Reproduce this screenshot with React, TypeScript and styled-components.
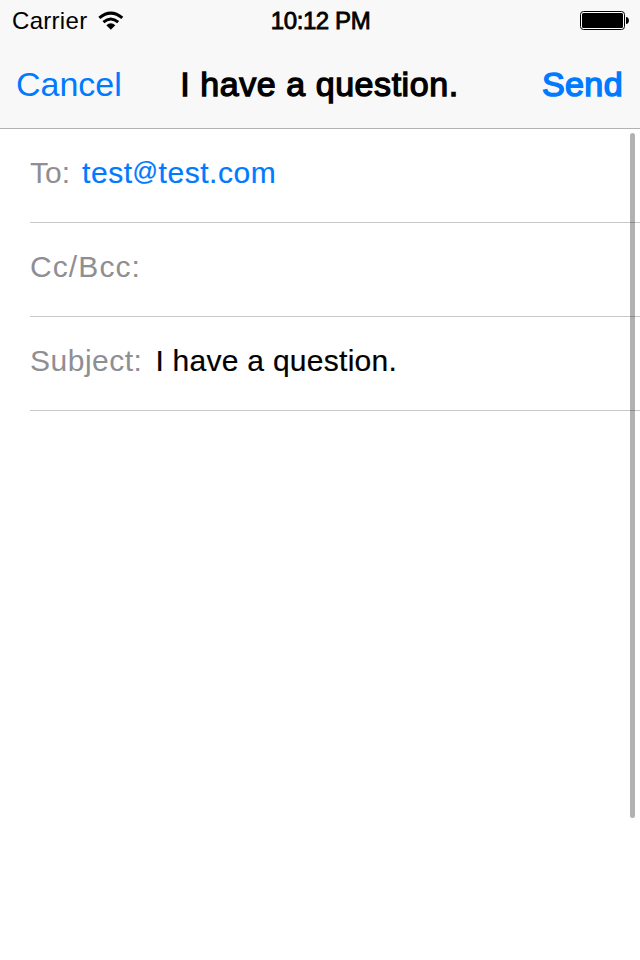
import React from "react";
import styled, { createGlobalStyle } from "styled-components";

const Global = createGlobalStyle`
  * { box-sizing: border-box; }
  html, body { margin: 0; background: #fff; overflow: hidden; }
  body { font-family: "Liberation Sans", Arial, sans-serif; color: #000; }
`;

const Screen = styled.main`
  width: 640px;
  height: 960px;
  display: flex;
  flex-direction: column;
  background: #fff;
`;

const Header = styled.header`
  height: 129px;
  background: #f8f8f8;
  border-bottom: 1px solid #b2b2b2;
`;

const StatusBar = styled.div`
  height: 40px;
  display: grid;
  grid-template-columns: 1fr auto 1fr;
  align-items: center;
  padding: 2px 11px 0 12px;
`;

const Carrier = styled.div`
  display: flex;
  align-items: center;
  gap: 10.6px;
`;

const Icon = styled.svg`
  display: block;
  flex: none;
`;

const BatterySlot = styled.div`
  display: flex;
  justify-content: flex-end;
  padding-bottom: 2px;
`;

const NavBar = styled.nav`
  height: 88px;
  display: grid;
  grid-template-columns: 1fr auto 1fr;
  align-items: center;
  padding: 0 17px 0 16px;
`;

const Action = styled.button<{ $end?: boolean }>`
  justify-self: ${(p) => (p.$end ? "end" : "start")};
  border: 0;
  padding: 0;
  background: none;
  font-family: inherit;
  color: #007aff;
`;

const Body = styled.section`
  flex: 1;
  display: grid;
  grid-template-columns: 1fr;
`;

const Fields = styled.div`
  grid-area: 1 / 1;
  padding-left: 30px;
`;

const Field = styled.div<{ $gap?: number }>`
  height: 94px;
  display: flex;
  align-items: center;
  gap: ${(p) => p.$gap ?? 12}px;
  padding-bottom: 6px;
  border-bottom: 1px solid #c8c7cc;
`;

const ScrollThumb = styled.div`
  grid-area: 1 / 1;
  justify-self: end;
  width: 5px;
  height: 685px;
  margin: 4px 5px 0 0;
  border-radius: 3px;
  background: rgba(0, 0, 0, 0.3);
`;

const Text = styled.span<{ $size: number; $track?: number; $weight?: number; $color?: string }>`
  font-size: ${(p) => p.$size}px;
  letter-spacing: ${(p) => p.$track ?? 0}px;
  -webkit-text-stroke: ${(p) => p.$weight ?? 0}px currentColor;
  color: ${(p) => p.$color ?? "inherit"};
  white-space: nowrap;
`;

const AtSign = styled.span`
  font-size: 25px;
  line-height: 1;
  vertical-align: 3px;
`;

const GREY = "#8e8e93";
const BLUE = "#007aff";

function WifiIcon() {
  return (
    <Icon width="26" height="20" viewBox="0 0 26 20">
      <g fill="none" stroke="#000" strokeWidth="3">
        <path d="M1.3 6.9Q12.8-2.7 24.3 6.9" />
        <path d="M5.4 11.2Q12.8 4.9 20.2 11.2" />
      </g>
      <path d="M8.3 14.3Q12.8 10.1 17.3 14.3L12.8 18.8Z" />
    </Icon>
  );
}

function BatteryIcon() {
  return (
    <Icon width="49" height="19" viewBox="0 0 49 19">
      <rect x="0.5" y="0.5" width="44" height="18" rx="3" fill="#fff" stroke="#000" />
      <rect x="2" y="2" width="41" height="15" rx="1.5" />
      <path d="M46 6C49.9 6 49.9 13 46 13Z" />
    </Icon>
  );
}

export default function App() {
  return (
    <Screen>
      <Global />
      <Header>
        <StatusBar>
          <Carrier>
            <Text $size={24} $track={0.3}>Carrier</Text>
            <WifiIcon />
          </Carrier>
          <Text $size={24} $track={-0.4} $weight={0.8}>10:12 PM</Text>
          <BatterySlot>
            <BatteryIcon />
          </BatterySlot>
        </StatusBar>
        <NavBar>
          <Action><Text $size={34}>Cancel</Text></Action>
          <Text $size={34} $track={0.55} $weight={1.3}>I have a question.</Text>
          <Action $end><Text $size={34} $track={0.4} $weight={1.5}>Send</Text></Action>
        </NavBar>
      </Header>
      <Body>
        <Fields>
          <Field>
            <Text $size={30} $color={GREY}>To:</Text>
            <Text $size={30} $track={0.55} $weight={0.2} $color={BLUE}>test<AtSign>@</AtSign>test.com</Text>
          </Field>
          <Field>
            <Text $size={30} $track={1.1} $color={GREY}>Cc/Bcc:</Text>
          </Field>
          <Field $gap={13}>
            <Text $size={30} $track={0.5} $color={GREY}>Subject:</Text>
            <Text $size={30} $track={0.27} $weight={0.2}>I have a question.</Text>
          </Field>
        </Fields>
        <ScrollThumb />
      </Body>
    </Screen>
  );
}
